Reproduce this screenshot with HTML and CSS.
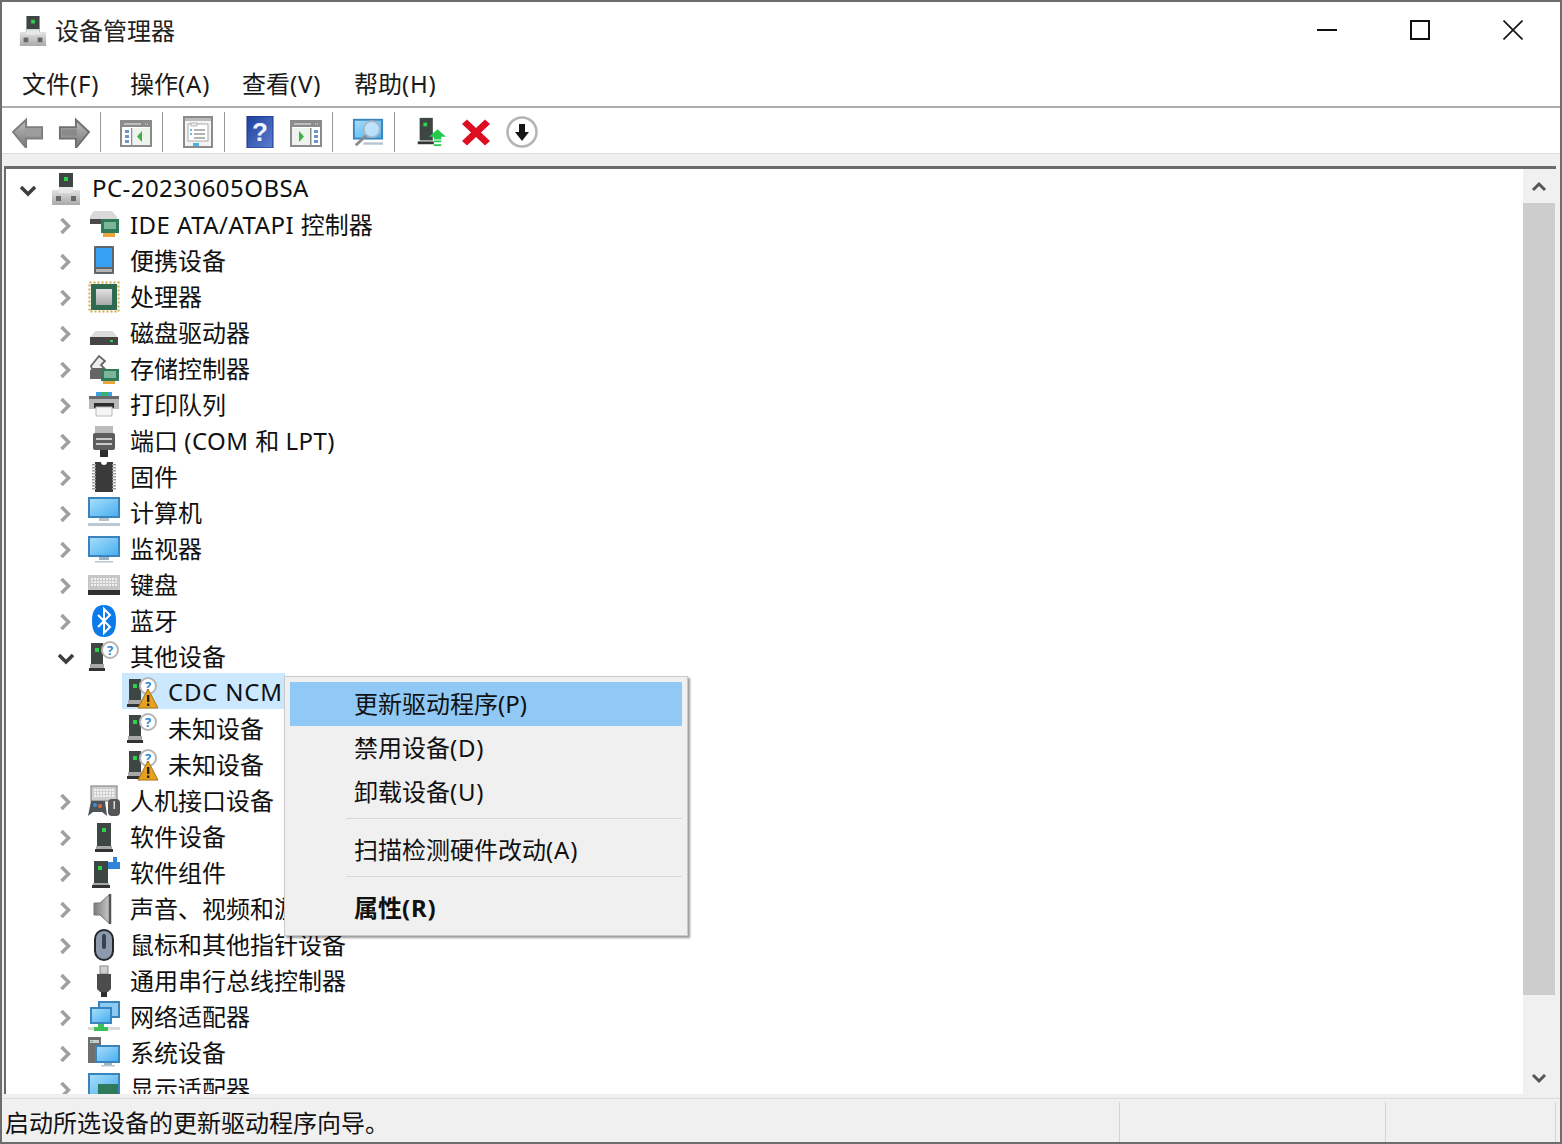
FILE: index.html
```html
<!DOCTYPE html>
<html lang="zh-CN">
<head>
<meta charset="utf-8">
<title>设备管理器</title>
<link rel="stylesheet" href="styles.css">
</head>
<body>
<svg class="defs" aria-hidden="true">
  <defs>
    <linearGradient id="gScreen" x1="0" y1="0" x2="1" y2="1"><stop offset="0" stop-color="#a6dcfb"/><stop offset="1" stop-color="#48b0f0"/></linearGradient>
    <linearGradient id="gGrey" x1="0" y1="0" x2="0" y2="1"><stop offset="0" stop-color="#e2e2e2"/><stop offset="1" stop-color="#a9a9a9"/></linearGradient>
    <linearGradient id="gSpeak" x1="0" y1="0" x2="1" y2="0"><stop offset="0" stop-color="#7c7c7c"/><stop offset="1" stop-color="#c9c9c9"/></linearGradient>
    <linearGradient id="gArrow" x1="0" y1="0" x2="0" y2="1"><stop offset="0" stop-color="#bdbdbd"/><stop offset="1" stop-color="#777"/></linearGradient>
    <linearGradient id="gHelp" x1="0" y1="0" x2="1" y2="1"><stop offset="0" stop-color="#1d3f9e"/><stop offset="1" stop-color="#5c7fd0"/></linearGradient>

    <symbol id="i-root" viewBox="0 0 32 32"><rect x="9" y="0" width="14" height="18" fill="#3d4643"/><rect x="14" y="4" width="4" height="4" fill="#2ed14c"/><rect x="2" y="17" width="28" height="15" fill="url(#gGrey)"/><rect x="9" y="14" width="14" height="6" fill="#e8e8e8"/><rect x="6" y="23" width="5" height="5" fill="#666"/><rect x="21" y="23" width="5" height="5" fill="#666"/></symbol>

    <symbol id="i-ide" viewBox="0 0 32 32"><path d="M6 2h18l5 6v5H2V7z" fill="#d9d9d9"/><rect x="2" y="10" width="22" height="5" fill="#4a4a4a"/><rect x="13" y="10" width="18" height="14" fill="#2f7a58"/><rect x="16" y="13" width="12" height="7" fill="#7db598"/><rect x="15" y="24" width="12" height="4" fill="#e8a73c"/></symbol>
    <symbol id="i-portable" viewBox="0 0 32 32"><rect x="6" y="1" width="20" height="28" rx="1" fill="#5f6569"/><rect x="8" y="3" width="16" height="19" fill="#35a0f4"/><rect x="8" y="24" width="16" height="3" fill="#b4b4b4"/></symbol>
    <symbol id="i-cpu" viewBox="0 0 32 32"><rect x="1.5" y="1.5" width="29" height="29" fill="none" stroke="#d0a84a" stroke-width="2" stroke-dasharray="2 2"/><rect x="3" y="3" width="26" height="26" fill="#2f6a50"/><rect x="8" y="8" width="16" height="16" fill="url(#gGrey)"/></symbol>
    <symbol id="i-disk" viewBox="0 0 32 32"><path d="M7 14h18l5 7H2z" fill="#dcdcdc"/><rect x="2" y="20" width="28" height="8" fill="#454545"/><rect x="22" y="23" width="3" height="2" fill="#39d05a"/></symbol>
    <symbol id="i-storage" viewBox="0 0 32 32"><path d="M3 13 11 3l6 5-4 4 4 4H4z" fill="#eee" stroke="#666" stroke-width="1.800"/><rect x="2" y="17" width="14" height="9" fill="#666"/><rect x="13" y="16" width="18" height="12" fill="#2f7a58"/><rect x="16" y="18" width="12" height="7" fill="#7db598"/><rect x="15" y="28" width="12" height="3" fill="#e8a73c"/></symbol>
    <symbol id="i-printer" viewBox="0 0 32 32"><rect x="8" y="3" width="16" height="6" fill="#3fa0e0"/><rect x="13" y="3" width="6" height="6" fill="#38b565"/><rect x="1" y="7" width="30" height="13" fill="#b9b9b9"/><rect x="1" y="7" width="30" height="3" fill="#6b6b6b"/><rect x="6" y="14" width="20" height="5" fill="#2d2d2d"/><rect x="8" y="18" width="16" height="9" fill="#f4f4f4" stroke="#bbb"/></symbol>
    <symbol id="i-port" viewBox="0 0 32 32"><rect x="7" y="1" width="18" height="8" fill="#bbb"/><rect x="5" y="8" width="22" height="17" rx="2" fill="#5d5d5d"/><rect x="8" y="13" width="16" height="2" fill="#c9c9c9"/><rect x="8" y="18" width="16" height="2" fill="#c9c9c9"/><rect x="12" y="25" width="8" height="7" fill="#2e2e2e"/></symbol>
    <symbol id="i-chip" viewBox="0 0 32 32"><path d="M7 1h6a3 3 0 0 0 6 0h6v30H7z" fill="#3a3a3a"/><path d="M6 3v26M26 3v26" stroke="#9c9c9c" stroke-width="4" stroke-dasharray="1.500 1.500"/></symbol>
    <symbol id="i-pc" viewBox="0 0 32 32"><rect x="0" y="0" width="32" height="21" fill="#3a84bd"/><rect x="2" y="2" width="28" height="17" fill="url(#gScreen)"/><rect x="11" y="21" width="10" height="3" fill="#b5c3cc"/><rect x="0" y="26" width="32" height="3" fill="#b9c8d2"/></symbol>
    <symbol id="i-monitor" viewBox="0 0 32 32"><rect x="0" y="3" width="32" height="21" fill="#3a84bd"/><rect x="2" y="5" width="28" height="17" fill="url(#gScreen)"/><rect x="11" y="24" width="10" height="3" fill="#9fb3c0"/><rect x="7" y="28" width="18" height="1.500" fill="#b9c8d2"/></symbol>
    <symbol id="i-keyboard" viewBox="0 0 32 32"><rect x="0" y="6" width="32" height="16" fill="#c7c7c7"/><path d="M3 10h26M3 13h26M3 16h26" stroke="#f0f0f0" stroke-width="2" stroke-dasharray="2 1"/><rect x="0" y="21" width="32" height="5" fill="#2f2f2f"/></symbol>
    <symbol id="i-bt" viewBox="0 0 32 32"><path d="M16 0c8 0 12 5 12 16s-4 16-12 16S4 27 4 16 8 0 16 0z" fill="#0a7be8"/><path d="M10 10l12 12-6 6V4l6 6-12 12" fill="none" stroke="#fff" stroke-width="2"/></symbol>
    <symbol id="i-other" viewBox="0 0 32 32"><path d="M3 2h12v22H3z" fill="#3d4643"/><rect x="7" y="7" width="4" height="4" fill="#2ed14c"/><rect x="2" y="23" width="14" height="4" fill="#a8a8a8"/><rect x="1" y="27" width="16" height="3" fill="#333"/><circle cx="22" cy="9" r="8" fill="#fff" stroke="#b5b5b5" stroke-width="2"/><text x="22" y="14" class="qm">?</text></symbol>
    <symbol id="i-warn" viewBox="0 0 32 32"><use href="#i-other"/><path d="M22 12 32 31H12z" fill="#e6a11f" stroke="#a77414" stroke-width="1"/><rect x="21" y="18" width="2.400" height="7" fill="#222"/><rect x="21" y="26.500" width="2.400" height="2.400" fill="#222"/></symbol>
    <symbol id="i-hid" viewBox="0 0 32 32"><rect x="3" y="1" width="26" height="15" fill="#cfcfcf" stroke="#777"/><path d="M6 5h20M6 8h20M6 11h20" stroke="#f2f2f2" stroke-width="2" stroke-dasharray="2 1"/><path d="M0 31l3-15h14l2 15-5-4H5z" fill="#4c5458"/><circle cx="7" cy="20" r="2" fill="#3a8fe0"/><circle cx="12" cy="21" r="2" fill="#e06a3a"/><rect x="20" y="14" width="12" height="17" rx="4" fill="#565656"/><rect x="25.500" y="16" width="1.500" height="8" fill="#ddd"/></symbol>
    <symbol id="i-soft" viewBox="0 0 32 32"><rect x="9" y="2" width="14" height="23" fill="#3d4643"/><rect x="14" y="7" width="4" height="4" fill="#2ed14c"/><rect x="8" y="25" width="16" height="3" fill="#a8a8a8"/><rect x="7" y="28" width="18" height="3" fill="#333"/></symbol>
    <symbol id="i-softcomp" viewBox="0 0 32 32"><rect x="6" y="4" width="14" height="22" fill="#3d4643"/><rect x="10" y="9" width="4" height="4" fill="#2ed14c"/><rect x="5" y="26" width="16" height="2" fill="#a8a8a8"/><rect x="4" y="28" width="18" height="3" fill="#333"/><path d="M20 5h5V0h4v5h3v7H20z" fill="#2f86d8"/></symbol>
    <symbol id="i-sound" viewBox="0 0 32 32"><path d="M6 10h6L22 1v30L12 22H6z" fill="url(#gSpeak)" stroke="#777"/><path d="M22 1v30" stroke="#555" stroke-width="2.500"/></symbol>
    <symbol id="i-mouse" viewBox="0 0 32 32"><rect x="7" y="1" width="18" height="30" rx="9" fill="#8c9aac" stroke="#23272e" stroke-width="2"/><rect x="14" y="5" width="4" height="15" rx="2" fill="#39424f"/></symbol>
    <symbol id="i-usb" viewBox="0 0 32 32"><rect x="12" y="1" width="8" height="8" fill="#cfcfcf" stroke="#888"/><path d="M9 9h14v15l-3 3h-8l-3-3z" fill="#4c4c4c"/><rect x="13" y="27" width="6" height="5" fill="#2e2e2e"/></symbol>
    <symbol id="i-net" viewBox="0 0 32 32"><rect x="10" y="0" width="22" height="17" fill="#3a84bd"/><rect x="12" y="2" width="18" height="13" fill="#8ccaf4"/><rect x="2" y="6" width="22" height="17" fill="#3a84bd"/><rect x="4" y="8" width="18" height="13" fill="url(#gScreen)"/><rect x="0" y="26" width="32" height="3" fill="#d8dcd8"/><path d="M10 23h6v3h4v4H6v-4h4z" fill="#3cc05a"/></symbol>
    <symbol id="i-sys" viewBox="0 0 32 32"><rect x="0" y="0" width="13" height="26" fill="#6e6e6e"/><rect x="2" y="3" width="9" height="3" fill="#ccc"/><rect x="3" y="4" width="2" height="1" fill="#2ed14c"/><rect x="7" y="8" width="25" height="18" fill="#3a84bd"/><rect x="9" y="10" width="21" height="14" fill="url(#gScreen)"/><rect x="16" y="26" width="8" height="2" fill="#9fb3c0"/><rect x="13" y="28" width="14" height="1.500" fill="#b9c8d2"/></symbol>
    <symbol id="i-disp" viewBox="0 0 32 32"><rect x="0" y="0" width="32" height="24" fill="#3a84bd"/><rect x="2" y="2" width="28" height="21" fill="url(#gScreen)"/><rect x="10" y="11" width="20" height="12" fill="#2f7a58"/></symbol>

    <symbol id="t-back" viewBox="0 0 34 32"><path d="M1 16 15 3v8h17v12H15v10z" fill="url(#gArrow)" stroke="#7d7d7d" stroke-width="2"/><rect x="14" y="13" width="16" height="7" fill="#9d9d9d"/></symbol>
    <symbol id="t-fwd" viewBox="0 0 34 32"><path d="M33 16 19 3v8H2v12h17v10z" fill="url(#gArrow)" stroke="#6f6f6f" stroke-width="2"/><rect x="4" y="13" width="16" height="7" fill="#8a8a8a"/></symbol>
    <symbol id="t-pane-l" viewBox="0 0 32 32"><rect x="1" y="5" width="30" height="25" fill="#fff" stroke="#8b8b8b" stroke-width="2"/><rect x="1" y="5" width="30" height="6" fill="#8b8b8b"/><path d="M4 8h17" stroke="#eee"/><path d="M25 8h4" stroke="#ddd" stroke-dasharray="1 1"/><rect x="11" y="12" width="1.500" height="17" fill="#8b8b8b"/><rect x="5" y="14" width="4" height="3" fill="#6c96c8"/><rect x="5" y="19" width="4" height="3" fill="#6c96c8"/><rect x="5" y="24" width="4" height="3" fill="#6c96c8"/><rect x="12.500" y="12" width="17.500" height="17" fill="#eef3ee"/><path d="M22 15v11l-5-5.500z" fill="#3fb14a"/></symbol>
    <symbol id="t-pane-r" viewBox="0 0 32 32"><rect x="1" y="5" width="30" height="25" fill="#fff" stroke="#8b8b8b" stroke-width="2"/><rect x="1" y="5" width="30" height="6" fill="#8b8b8b"/><path d="M4 8h17" stroke="#eee"/><path d="M25 8h4" stroke="#ddd" stroke-dasharray="1 1"/><rect x="20" y="12" width="1.500" height="17" fill="#8b8b8b"/><rect x="24" y="14" width="4" height="3" fill="#6c96c8"/><rect x="24" y="19" width="4" height="3" fill="#6c96c8"/><rect x="24" y="24" width="4" height="3" fill="#6c96c8"/><rect x="2" y="12" width="18" height="17" fill="#eef3ee"/><path d="M9 15v11l5-5.500z" fill="#3fb14a"/></symbol>
    <symbol id="t-props" viewBox="0 0 32 32"><rect x="2" y="1" width="28" height="30" fill="#f4f4f4" stroke="#8b8b8b" stroke-width="2"/><rect x="3" y="2" width="26" height="3" fill="#bbb"/><rect x="6" y="8" width="20" height="17" fill="#fff" stroke="#aaa"/><rect x="9" y="7" width="6" height="3" fill="#eee" stroke="#aaa" stroke-width=".8"/><path d="M12 14h11M12 18h11M12 22h11" stroke="#9a9a9a" stroke-width="1.300"/><path d="M8 14h2M8 18h2" stroke="#3f9fd8" stroke-width="1.500"/><rect x="11" y="27" width="6" height="3" fill="#43b4e4"/></symbol>
    <symbol id="t-help" viewBox="0 0 32 32"><rect x="3" y="0" width="26" height="32" fill="url(#gHelp)" stroke="#1a347f"/><text x="16" y="25" class="hq">?</text></symbol>
    <symbol id="t-scan" viewBox="0 0 34 32"><rect x="1" y="2" width="32" height="22" fill="#3a84bd"/><rect x="3" y="4" width="28" height="18" fill="url(#gScreen)"/><rect x="12" y="27" width="21" height="2.500" fill="#b5c3cc"/><circle cx="21" cy="13" r="8.500" fill="#cfeafc" fill-opacity=".8" stroke="#a9b9c4" stroke-width="2"/><path d="M15 20 4 30" stroke="#8a8a8a" stroke-width="3"/></symbol>
    <symbol id="t-update" viewBox="0 0 34 32"><rect x="6" y="1" width="14" height="24" fill="#3d4643"/><rect x="10" y="6" width="4" height="4" fill="#2ed14c"/><rect x="4" y="26" width="17" height="3" fill="#333"/><path d="M25 13l9 8h-5v3h-8v-3h-5z" fill="#25c94c"/><path d="M21 26h8M21 30h8" stroke="#25c94c" stroke-width="2"/></symbol>
    <symbol id="t-del" viewBox="0 0 32 32"><path d="M7 3.500 16 12l9-8.500 5 4.500-9 8.500 9 8.500-5 4.500-9-8.500-9 8.500-5-4.500 9-8.500-9-8.500z" fill="#dd0e22"/></symbol>
    <symbol id="t-down" viewBox="0 0 32 32"><circle cx="16" cy="16" r="14.500" fill="#fff" stroke="#b4b4b4" stroke-width="2.500"/><path d="M13 8h6v8h4l-7 9-7-9h4z" fill="#161616"/></symbol>
    <symbol id="c-right" viewBox="0 0 16 20"><path d="M3.500 3l7 7-7 7" fill="none" stroke="#a0a0a0" stroke-width="3.500"/></symbol>
    <symbol id="c-down" viewBox="0 0 16 20"><path d="M1 7l7 7 7-7" fill="none" stroke="#3d3d3d" stroke-width="3.500"/></symbol>
  </defs>
</svg>

<div class="window">
  <header class="titlebar">
    <div class="title-left">
      <svg class="app-icon"><use href="#i-root"/></svg>
      <span class="title-text">设备管理器</span>
    </div>
    <div class="caption">
      <svg class="cap-btn" viewBox="0 0 20 20"><path d="M0 10h20" stroke="#111" stroke-width="2"/></svg>
      <svg class="cap-btn" viewBox="0 0 20 20"><rect x="1" y="1" width="18" height="18" fill="none" stroke="#111" stroke-width="2"/></svg>
      <svg class="cap-btn" viewBox="0 0 20 20"><path d="M.5.500l19 19M19.500.500l-19 19" stroke="#111" stroke-width="1.600"/></svg>
    </div>
  </header>

  <nav class="menubar">
    <span>文件<span class="lat-w">(F)</span></span><span>操作<span class="lat-w">(A)</span></span><span>查看<span class="lat-w">(V)</span></span><span>帮助<span class="lat-w">(H)</span></span>
  </nav>

  <div class="toolbar">
    <svg class="tool"><use href="#t-back"/></svg>
    <svg class="tool"><use href="#t-fwd"/></svg>
    <i class="tsep"></i>
    <svg class="tool"><use href="#t-pane-l"/></svg>
    <i class="tsep"></i>
    <svg class="tool"><use href="#t-props"/></svg>
    <i class="tsep"></i>
    <svg class="tool"><use href="#t-help"/></svg>
    <svg class="tool"><use href="#t-pane-r"/></svg>
    <i class="tsep"></i>
    <svg class="tool"><use href="#t-scan"/></svg>
    <i class="tsep"></i>
    <svg class="tool"><use href="#t-update"/></svg>
    <svg class="tool"><use href="#t-del"/></svg>
    <svg class="tool"><use href="#t-down"/></svg>
  </div>

  <main class="tree-wrap">
    <div class="tree">
      <div class="row l0"><svg class="chev"><use href="#c-down"/></svg><span class="label"><svg class="ico"><use href="#i-root"/></svg><span class="lat">PC-20230605OBSA</span></span></div>
      <div class="row l1"><svg class="chev"><use href="#c-right"/></svg><span class="label"><svg class="ico"><use href="#i-ide"/></svg><span><span class="lat">IDE ATA/ATAPI </span>控制器</span></span></div>
      <div class="row l1"><svg class="chev"><use href="#c-right"/></svg><span class="label"><svg class="ico"><use href="#i-portable"/></svg>便携设备</span></div>
      <div class="row l1"><svg class="chev"><use href="#c-right"/></svg><span class="label"><svg class="ico"><use href="#i-cpu"/></svg>处理器</span></div>
      <div class="row l1"><svg class="chev"><use href="#c-right"/></svg><span class="label"><svg class="ico"><use href="#i-disk"/></svg>磁盘驱动器</span></div>
      <div class="row l1"><svg class="chev"><use href="#c-right"/></svg><span class="label"><svg class="ico"><use href="#i-storage"/></svg>存储控制器</span></div>
      <div class="row l1"><svg class="chev"><use href="#c-right"/></svg><span class="label"><svg class="ico"><use href="#i-printer"/></svg>打印队列</span></div>
      <div class="row l1"><svg class="chev"><use href="#c-right"/></svg><span class="label"><svg class="ico"><use href="#i-port"/></svg><span>端口 <span class="lat">(COM </span>和 <span class="lat">LPT)</span></span></span></div>
      <div class="row l1"><svg class="chev"><use href="#c-right"/></svg><span class="label"><svg class="ico"><use href="#i-chip"/></svg>固件</span></div>
      <div class="row l1"><svg class="chev"><use href="#c-right"/></svg><span class="label"><svg class="ico"><use href="#i-pc"/></svg>计算机</span></div>
      <div class="row l1"><svg class="chev"><use href="#c-right"/></svg><span class="label"><svg class="ico"><use href="#i-monitor"/></svg>监视器</span></div>
      <div class="row l1"><svg class="chev"><use href="#c-right"/></svg><span class="label"><svg class="ico"><use href="#i-keyboard"/></svg>键盘</span></div>
      <div class="row l1"><svg class="chev"><use href="#c-right"/></svg><span class="label"><svg class="ico"><use href="#i-bt"/></svg>蓝牙</span></div>
      <div class="row l1"><svg class="chev"><use href="#c-down"/></svg><span class="label"><svg class="ico"><use href="#i-other"/></svg>其他设备</span></div>
      <div class="row l2"><span class="label selected"><svg class="ico"><use href="#i-warn"/></svg><span class="lat-w">CDC NCM</span></span></div>
      <div class="row l2"><span class="label"><svg class="ico"><use href="#i-other"/></svg>未知设备</span></div>
      <div class="row l2"><span class="label"><svg class="ico"><use href="#i-warn"/></svg>未知设备</span></div>
      <div class="row l1"><svg class="chev"><use href="#c-right"/></svg><span class="label"><svg class="ico"><use href="#i-hid"/></svg>人机接口设备</span></div>
      <div class="row l1"><svg class="chev"><use href="#c-right"/></svg><span class="label"><svg class="ico"><use href="#i-soft"/></svg>软件设备</span></div>
      <div class="row l1"><svg class="chev"><use href="#c-right"/></svg><span class="label"><svg class="ico"><use href="#i-softcomp"/></svg>软件组件</span></div>
      <div class="row l1"><svg class="chev"><use href="#c-right"/></svg><span class="label"><svg class="ico"><use href="#i-sound"/></svg>声音、视频和游戏控制器</span></div>
      <div class="row l1"><svg class="chev"><use href="#c-right"/></svg><span class="label"><svg class="ico"><use href="#i-mouse"/></svg>鼠标和其他指针设备</span></div>
      <div class="row l1"><svg class="chev"><use href="#c-right"/></svg><span class="label"><svg class="ico"><use href="#i-usb"/></svg>通用串行总线控制器</span></div>
      <div class="row l1"><svg class="chev"><use href="#c-right"/></svg><span class="label"><svg class="ico"><use href="#i-net"/></svg>网络适配器</span></div>
      <div class="row l1"><svg class="chev"><use href="#c-right"/></svg><span class="label"><svg class="ico"><use href="#i-sys"/></svg>系统设备</span></div>
      <div class="row l1"><svg class="chev"><use href="#c-right"/></svg><span class="label"><svg class="ico"><use href="#i-disp"/></svg>显示适配器</span></div>
    </div>
    <div class="scrollbar">
      <svg class="sb-btn" viewBox="0 0 32 34"><path d="M10 21l6-6 6 6" fill="none" stroke="#555" stroke-width="3"/></svg>
      <div class="sb-track"><div class="sb-thumb"></div></div>
      <svg class="sb-btn" viewBox="0 0 32 34"><path d="M10 15l6 6 6-6" fill="none" stroke="#555" stroke-width="3"/></svg>
    </div>
  </main>

  <footer class="statusbar">
    <div class="st-main">启动所选设备的更新驱动程序向导。</div>
    <div class="st-mid"></div>
    <div class="st-end"></div>
  </footer>

  <div class="ctx">
    <div class="ctx-item active">更新驱动程序<span class="lat-s">(P)</span></div>
    <div class="ctx-item">禁用设备<span class="lat-w">(D)</span></div>
    <div class="ctx-item">卸载设备<span class="lat-w">(U)</span></div>
    <div class="ctx-sep"></div>
    <div class="ctx-item">扫描检测硬件改动<span class="lat-w">(A)</span></div>
    <div class="ctx-sep"></div>
    <div class="ctx-item bold">属性<span class="lat-w">(R)</span></div>
  </div>
</div>
</body>
</html>
```
FILE: styles.css
```css
* { box-sizing: border-box; }
html, body { margin: 0; padding: 0; }
body {
  width: 1562px;
  height: 1144px;
  overflow: hidden;
  font-family: "Noto Sans", "Noto Sans CJK SC", sans-serif;
  font-size: 24px;
  color: #1a1a1a;
  background: #fff;
}
.defs { position: absolute; width: 0; height: 0; }
.qm { font-family: "Noto Sans", sans-serif; font-size: 13px; font-weight: 700; fill: #2f86d8; text-anchor: middle; }
.hq { font-family: "Liberation Sans", sans-serif; font-size: 26px; font-weight: 700; fill: #eef2fb; text-anchor: middle; }
.lat { letter-spacing: .45px; white-space: pre; }
.lat-w { letter-spacing: .8px; white-space: pre; }
.lat-s { letter-spacing: 0; }

.window {
  position: relative;
  width: 1562px;
  height: 1144px;
  display: flex;
  flex-direction: column;
  border: 2px solid #6d6d6d;
  background: #f0f0f0;
}

.titlebar {
  height: 58px;
  flex: none;
  display: flex;
  justify-content: space-between;
  align-items: center;
  background: #fff;
}
.title-left { display: flex; align-items: center; gap: 7px; padding-left: 16px; }
.app-icon { width: 30px; height: 32px; }
.title-text { line-height: 32px; color: #222; }
.caption { display: flex; gap: 73px; padding-right: 37px; padding-bottom: 2px; }
.cap-btn { width: 20px; height: 20px; display: block; }

.menubar {
  height: 46px;
  flex: none;
  display: grid;
  grid-template-columns: 108px 112px 112px auto;
  padding: 0 0 2px 20px;
  align-items: center;
  background: #fff;
}

.toolbar {
  height: 48px;
  flex: none;
  display: flex;
  align-items: center;
  gap: 14px;
  padding: 2px 0 0 10px;
  background: #fff;
  border-top: 2px solid #aeaeae;
  border-bottom: 1px solid #dcdcdc;
}
.tool { width: 32px; height: 32px; flex: none; display: block; }
.tsep { width: 1px; height: 40px; flex: none; background: #9a9a9a; margin: 0 5px 0 -4px; }

.tree-wrap {
  flex: 1;
  min-height: 0;
  display: flex;
  margin: 12px 4px 4px 2px;
  border-top: 3px solid #6b6b6b;
  border-left: 2px solid #6b6b6b;
  background: #fff;
}
.tree { flex: 1; min-width: 0; overflow: hidden; }
.row {
  height: 36px;
  display: flex;
  align-items: center;
  white-space: nowrap;
}
.l0 { padding-left: 14px; }
.l1 { padding-left: 52px; }
.l2 { padding-left: 116px; }
.chev { width: 16px; height: 20px; flex: none; margin: 5px 10px 0 0; }
.label {
  display: flex;
  align-items: center;
  gap: 10px;
  height: 36px;
  padding: 0 8px 0 4px;
  color: #111;
}
.label.selected { background: #cce8ff; padding-right: 2px; }
.ico { width: 32px; height: 32px; flex: none; margin-top: 4px; }

.scrollbar {
  width: 33px;
  flex: none;
  display: flex;
  flex-direction: column;
  background: #f0f0f0;
}
.sb-btn { width: 32px; height: 34px; flex: none; display: block; }
.sb-track { flex: 1; min-height: 0; }
.sb-thumb { width: 32px; height: 792px; background: #cdcdcd; }

.statusbar {
  height: 44px;
  flex: none;
  display: flex;
  border-top: 1px solid #dcdcdc;
  background: #f0f0f0;
}
.st-main { width: 1118px; padding-left: 3px; white-space: nowrap; color: #111; border-right: 1px solid #d4d4d4; margin-top: 3px; line-height: 42px; }
.st-mid { width: 266px; border-right: 1px solid #d4d4d4; margin-top: 3px; }
.st-end { width: 170px; border-right: 1px solid #d4d4d4; margin-top: 3px; }

.ctx {
  position: absolute;
  left: 282px;
  top: 674px;
  width: 404px;
  height: 260px;
  padding: 5px;
  background: #f0f0f0;
  border: 1px solid #c9c9c9;
  box-shadow: 2px 2px 2px rgba(0, 0, 0, .4);
}
.ctx-item { height: 44px; line-height: 44px; padding-left: 64px; color: #111; white-space: nowrap; }
.ctx-item.active { background: #90c8f6; }
.ctx-item.bold { font-weight: 700; }
.ctx-sep { height: 1px; margin: 4px 0 9px 56px; background: #d7d7d7; }
```
